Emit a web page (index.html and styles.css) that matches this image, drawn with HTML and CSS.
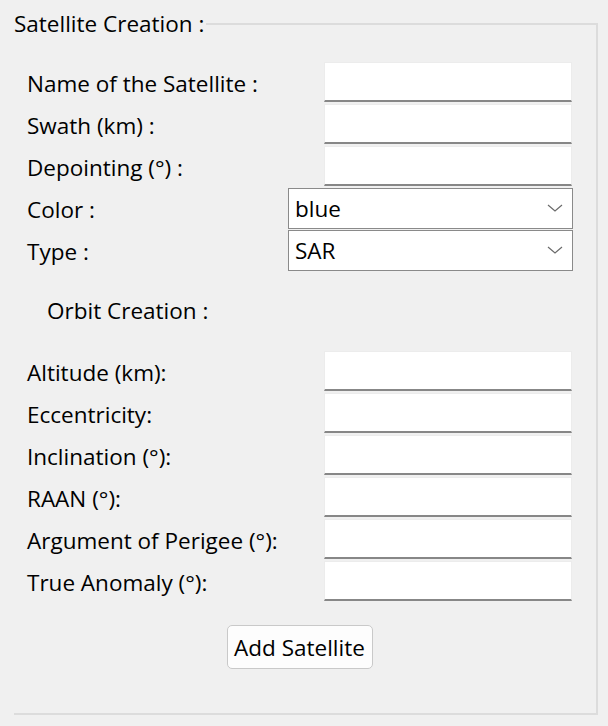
FILE: index.html
```html
<!DOCTYPE html>
<html>
<head>
<meta charset="utf-8">
<link rel="stylesheet" href="styles.css">
</head>
<body>
<fieldset class="group">
  <legend class="group-title">Satellite Creation :</legend>
  <div class="group-body">
    <div class="form">
      <label class="lbl">Name of the Satellite :</label><div class="input"></div>
      <label class="lbl">Swath (km) :</label><div class="input"></div>
      <label class="lbl">Depointing (°) :</label><div class="input"></div>
      <label class="lbl">Color :</label>
      <div class="combo"><span>blue</span><svg class="chev" width="16" height="8" viewBox="0 0 16 8"><path d="M1 1 L8 7 L15 1" fill="none" stroke="#6a6a6a" stroke-width="1.2"/></svg></div>
      <label class="lbl">Type :</label>
      <div class="combo"><span>SAR</span><svg class="chev" width="16" height="8" viewBox="0 0 16 8"><path d="M1 1 L8 7 L15 1" fill="none" stroke="#6a6a6a" stroke-width="1.2"/></svg></div>
    </div>
    <div class="subtitle">Orbit Creation :</div>
    <div class="form">
      <label class="lbl">Altitude (km):</label><div class="input"></div>
      <label class="lbl">Eccentricity:</label><div class="input"></div>
      <label class="lbl">Inclination (°):</label><div class="input"></div>
      <label class="lbl">RAAN (°):</label><div class="input"></div>
      <label class="lbl">Argument of Perigee (°):</label><div class="input"></div>
      <label class="lbl">True Anomaly (°):</label><div class="input"></div>
    </div>
    <div class="actions"><button class="btn">Add Satellite</button></div>
  </div>
</fieldset>
</body>
</html>
```
FILE: styles.css
```css
html, body {
  margin: 0;
  padding: 0;
  background: #f0f0f0;
}
body {
  font-family: "Open Sans", "Noto Sans", sans-serif;
  font-size: 22.5px;
  color: #000;
  width: 608px;
  height: 726px;
  overflow: hidden;
}
.group {
  margin: 10px 0 0 14px;
  width: 584px;
  height: 705px;
  box-sizing: border-box;
  border: 2px solid #dcdcdc;
  border-left: none;
  padding: 0;
}
.group-title {
  padding: 0 2px 0 0;
  margin: 0;
  line-height: 27px;
}
.group-body {
  padding: 25px 24px 0 13px;
}
.form {
  display: grid;
  grid-template-columns: 1fr auto;
  grid-auto-rows: 40px;
  row-gap: 2px;
  align-items: center;
}
.lbl {
  line-height: 26px;
  padding-top: 3px;
}
.input {
  width: 248px;
  height: 40px;
  box-sizing: border-box;
  background: #fff;
  border: 1px solid #ececec;
  border-bottom: 2px solid #878787;
  justify-self: end;
}
.combo {
  width: 285px;
  height: 41px;
  box-sizing: border-box;
  background: #fff;
  border: 1px solid #8a8a8a;
  justify-self: end;
  margin-right: -1px;
  display: flex;
  align-items: center;
  justify-content: space-between;
  padding: 0 9px 0 6px;
}
.chev {
  display: block;
}
.subtitle {
  margin: 20px 0 21px 20px;
  height: 40px;
  line-height: 42px;
}
.actions {
  display: flex;
  justify-content: center;
  margin-top: 24px;
}
.btn {
  font: inherit;
  color: #000;
  width: 146px;
  height: 44px;
  background: #fdfdfd;
  border: 1px solid #c9c9c9;
  border-radius: 5px;
  padding: 0;
}
```
